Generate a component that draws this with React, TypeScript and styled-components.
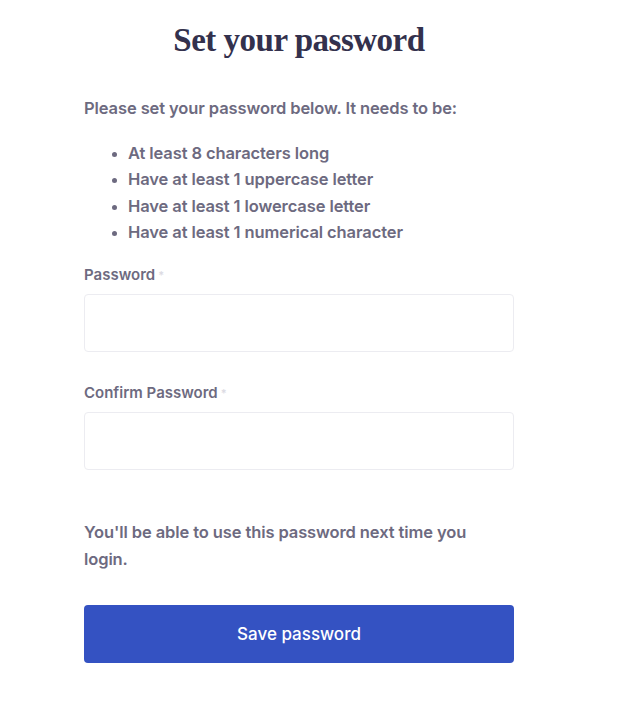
import styled, { createGlobalStyle } from "styled-components";

const GlobalStyle = createGlobalStyle`
  body {
    margin: 0;
    background: #ffffff;
    font-family: Inter, "Noto Sans", sans-serif;
  }
`;

const Page = styled.div`
  width: 430px;
  padding: 20px 0 40px 84px;
  display: flex;
  flex-direction: column;
`;

const Title = styled.h1`
  margin: 0;
  text-align: center;
  font-family: "Liberation Serif", serif;
  font-weight: 700;
  font-size: 33px;
  line-height: 40px;
  letter-spacing: -0.5px;
  color: #33314d;
`;

const Text = styled.p`
  margin: 0;
  font-size: 16.5px;
  font-weight: 600;
  line-height: 27px;
  letter-spacing: -0.1px;
  color: #6d6a80;
`;

const Intro = styled(Text)`
  margin-top: 35px;
`;

const Rules = styled.ul`
  margin: 18px 0 0;
  padding-left: 44px;
  font-size: 16.5px;
  font-weight: 600;
  line-height: 26.3px;
  letter-spacing: -0.1px;
  color: #6d6a80;

  li::marker {
    font-size: 14px;
  }
`;

const Field = styled.div<{ $top: number }>`
  display: flex;
  flex-direction: column;
  gap: 9px;
  margin-top: ${(p) => p.$top}px;
`;

const Label = styled.label`
  font-size: 15px;
  font-weight: 600;
  line-height: 20px;
  color: #6d6a80;
`;

const Required = styled.span`
  margin-left: 3px;
  font-size: 11px;
  vertical-align: top;
  color: #dcdbe3;
`;

const Input = styled.input`
  box-sizing: border-box;
  width: 100%;
  height: 58px;
  padding: 0 14px;
  border: 1px solid #ececf1;
  border-radius: 4px;
  background: #ffffff;
  font: inherit;
  outline: none;
`;

const Note = styled(Text)`
  max-width: 395px;
  margin-top: 49px;
`;

const Button = styled.button`
  margin-top: 32px;
  height: 58px;
  border: none;
  border-radius: 4px;
  background: #3452c2;
  color: #ffffff;
  font-family: Inter, "Noto Sans", sans-serif;
  font-size: 17px;
  font-weight: 500;
  cursor: pointer;
`;

export default function App() {
  return (
    <>
      <GlobalStyle />
      <Page>
        <Title>Set your password</Title>
        <Intro>Please set your password below. It needs to be:</Intro>
        <Rules>
          <li>At least 8 characters long</li>
          <li>Have at least 1 uppercase letter</li>
          <li>Have at least 1 lowercase letter</li>
          <li>Have at least 1 numerical character</li>
        </Rules>
        <Field $top={20}>
          <Label>
            Password<Required>*</Required>
          </Label>
          <Input type="password" />
        </Field>
        <Field $top={31}>
          <Label>
            Confirm Password<Required>*</Required>
          </Label>
          <Input type="password" />
        </Field>
        <Note>You'll be able to use this password next time you login.</Note>
        <Button>Save password</Button>
      </Page>
    </>
  );
}
